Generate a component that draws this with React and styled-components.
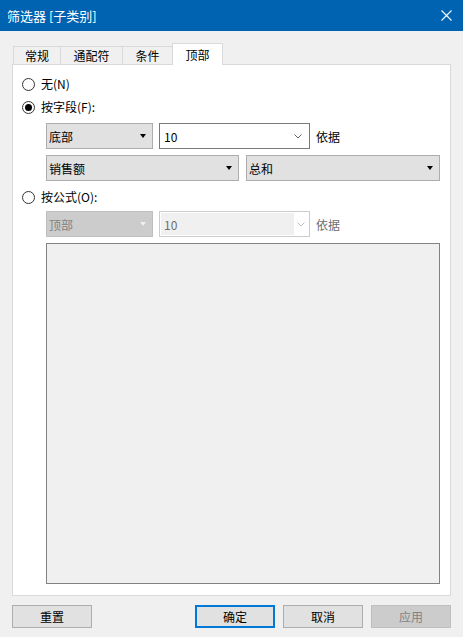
import React from "react";
import styled, { createGlobalStyle, css } from "styled-components";

const GlobalStyle = createGlobalStyle`
  html, body {
    margin: 0;
    padding: 0;
    background: #f0f0f0;
  }
  body {
    font-family: "Noto Sans CJK SC", "Noto Sans", sans-serif;
    font-size: 12px;
    color: #000;
  }
`;

const Window = styled.div`
  width: 463px;
  height: 637px;
  background: #f0f0f0;
  display: flex;
  flex-direction: column;
  box-sizing: border-box;
`;

const TitleBar = styled.div`
  height: 31px;
  flex: none;
  background: #0063b1;
  color: #fff;
  display: flex;
  align-items: center;
  justify-content: space-between;
  padding: 0 11px 0 7px;
  font-size: 13px;
  line-height: 31px;
`;

const CloseIcon = () => (
  <svg width="11" height="11" viewBox="0 0 11 11">
    <path d="M0.5 0.5 L10.5 10.5 M10.5 0.5 L0.5 10.5" stroke="#fff" strokeWidth="1.1" />
  </svg>
);

const Body = styled.div`
  flex: 1;
  display: flex;
  flex-direction: column;
  padding: 12px 12px 9px 12px;
`;

const TabStrip = styled.div`
  height: 21px;
  display: flex;
  align-items: flex-end;
  padding-left: 1px;
  position: relative;
  z-index: 1;
`;

const Tab = styled.div`
  box-sizing: border-box;
  width: ${(p) => p.$width}px;
  height: 18px;
  margin-left: -1px;
  border: 1px solid #d9d9d9;
  border-bottom: none;
  background: #f0f0f0;
  text-align: center;
  line-height: 17px;
  &:first-child {
    margin-left: 0;
  }
  ${(p) =>
    p.$active &&
    css`
      height: 22px;
      margin-bottom: -1px;
      background: #fff;
      line-height: 21px;
      padding-bottom: 2px;
    `}
`;

const Panel = styled.div`
  box-sizing: border-box;
  height: 532px;
  background: #fff;
  border: 1px solid #d9d9d9;
  padding: 11px 10px 11px 9px;
  display: flex;
  flex-direction: column;
`;

const RadioRow = styled.label`
  height: 16px;
  display: flex;
  align-items: center;
  gap: 6px;
  margin-top: ${(p) => p.$gap || 0}px;
  line-height: 16px;
`;

const RadioCircle = styled.span`
  box-sizing: border-box;
  width: 13px;
  height: 13px;
  border: 1px solid #333;
  border-radius: 50%;
  background: #fff;
  display: flex;
  align-items: center;
  justify-content: center;
  &::after {
    content: "";
    width: 7px;
    height: 7px;
    border-radius: 50%;
    background: ${(p) => (p.$checked ? "#000" : "transparent")};
  }
`;

const ControlRow = styled.div`
  height: 26px;
  margin-top: ${(p) => p.$gap}px;
  margin-left: 24px;
  display: flex;
  align-items: stretch;
  gap: ${(p) => p.$spacing || 6}px;
`;

const Dropdown = styled.div`
  box-sizing: border-box;
  width: ${(p) => p.$width}px;
  border: 1px solid ${(p) => (p.$disabled ? "#bfbfbf" : "#adadad")};
  background: ${(p) => (p.$disabled ? "#cccccc" : "#e1e1e1")};
  color: ${(p) => (p.$disabled ? "#838383" : "#000")};
  display: flex;
  align-items: center;
  justify-content: space-between;
  padding: 0 6px 0 2px;
`;

const Triangle = styled.span`
  width: 0;
  height: 0;
  border-left: 3.5px solid transparent;
  border-right: 3.5px solid transparent;
  border-top: 4px solid ${(p) => (p.$disabled ? "#f0f0f0" : "#000")};
`;

const Combo = styled.div`
  box-sizing: border-box;
  width: ${(p) => p.$width}px;
  border: 1px solid ${(p) => (p.$disabled ? "#cccccc" : "#7a7a7a")};
  background: #fff;
  padding: ${(p) => (p.$disabled ? "1px" : "0")};
  display: flex;
  align-items: stretch;
`;

const ComboText = styled.span`
  flex: ${(p) => (p.$disabled ? "none" : "1")};
  width: ${(p) => (p.$disabled ? "130px" : "auto")};
  background: ${(p) => (p.$disabled ? "#f0f0f0" : "transparent")};
  color: ${(p) => (p.$disabled ? "#6d6d6d" : "#000")};
  display: flex;
  align-items: center;
  padding-left: ${(p) => (p.$disabled ? "3px" : "4px")};
`;

const ChevronBox = styled.span`
  margin-left: auto;
  width: 22px;
  display: flex;
  align-items: center;
  justify-content: center;
`;

const Chevron = ({ color }) => (
  <svg width="8" height="5" viewBox="0 0 8 5">
    <path d="M0.5 0.5 L4 4 L7.5 0.5" fill="none" stroke={color} strokeWidth="1" />
  </svg>
);

const ByLabel = styled.span`
  display: flex;
  align-items: center;
  color: ${(p) => (p.$disabled ? "#6d6d6d" : "#000")};
`;

const FormulaBox = styled.div`
  box-sizing: border-box;
  height: 341px;
  width: 394px;
  margin: 6px 0 0 24px;
  background: #f0f0f0;
  border: 1px solid #828282;
`;

const Footer = styled.div`
  height: 23px;
  margin-top: 9px;
  display: flex;
  justify-content: space-between;
`;

const ButtonGroup = styled.div`
  display: flex;
  gap: 8px;
`;

const Button = styled.div`
  box-sizing: border-box;
  width: 80px;
  height: 23px;
  border: 1px solid #adadad;
  background: #e1e1e1;
  display: flex;
  align-items: center;
  justify-content: center;
  ${(p) =>
    p.$primary &&
    css`
      border: 2px solid #0078d7;
    `}
  ${(p) =>
    p.$disabled &&
    css`
      border-color: #bfbfbf;
      background: #cccccc;
      color: #838383;
    `}
`;

const tabs = [
  { label: "常规", width: 48 },
  { label: "通配符", width: 63 },
  { label: "条件", width: 51 },
  { label: "顶部", width: 51, active: true },
];

export default function App() {
  return (
    <>
      <GlobalStyle />
      <Window>
        <TitleBar>
          <span>筛选器 [子类别]</span>
          <CloseIcon />
        </TitleBar>
        <Body>
          <TabStrip>
            {tabs.map((t) => (
              <Tab key={t.label} $width={t.width} $active={t.active}>
                {t.label}
              </Tab>
            ))}
          </TabStrip>
          <Panel>
            <RadioRow>
              <RadioCircle />
              无(N)
            </RadioRow>
            <RadioRow $gap={7}>
              <RadioCircle $checked />
              按字段(F):
            </RadioRow>
            <ControlRow $gap={8}>
              <Dropdown $width={107}>
                底部
                <Triangle />
              </Dropdown>
              <Combo $width={151}>
                <ComboText>10</ComboText>
                <ChevronBox>
                  <Chevron color="#606060" />
                </ChevronBox>
              </Combo>
              <ByLabel>依据</ByLabel>
            </ControlRow>
            <ControlRow $gap={6} $spacing={7}>
              <Dropdown $width={193}>
                销售额
                <Triangle />
              </Dropdown>
              <Dropdown $width={194}>
                总和
                <Triangle />
              </Dropdown>
            </ControlRow>
            <RadioRow $gap={8}>
              <RadioCircle />
              按公式(O):
            </RadioRow>
            <ControlRow $gap={6}>
              <Dropdown $width={107} $disabled>
                顶部
                <Triangle $disabled />
              </Dropdown>
              <Combo $width={151} $disabled>
                <ComboText $disabled>10</ComboText>
                <ChevronBox>
                  <Chevron color="#c2c2c2" />
                </ChevronBox>
              </Combo>
              <ByLabel $disabled>依据</ByLabel>
            </ControlRow>
            <FormulaBox />
          </Panel>
          <Footer>
            <Button>重置</Button>
            <ButtonGroup>
              <Button $primary>确定</Button>
              <Button>取消</Button>
              <Button $disabled>应用</Button>
            </ButtonGroup>
          </Footer>
        </Body>
      </Window>
    </>
  );
}
